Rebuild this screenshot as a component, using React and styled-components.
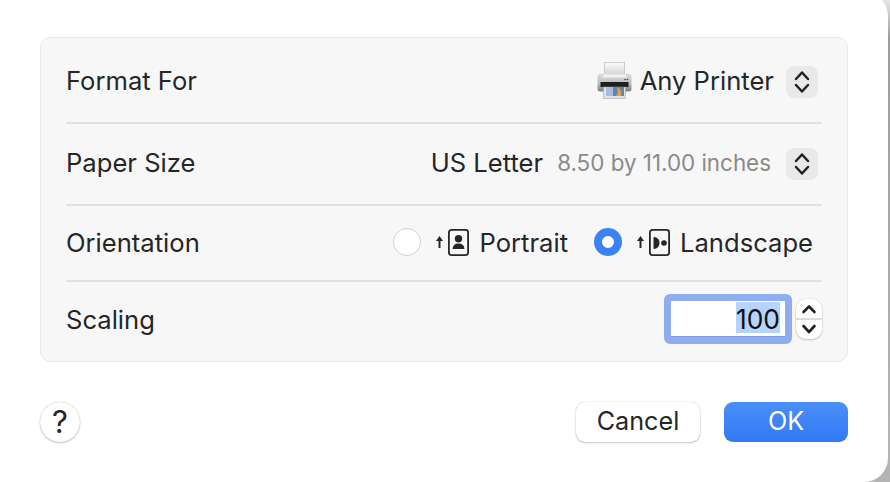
import React from "react";
import styled, {createGlobalStyle} from "styled-components";

const GlobalStyle = createGlobalStyle`
  html, body {
    margin: 0;
    padding: 0;
    background: linear-gradient(#e6e6e6, #9c9c9c 8%, #b4b4b4 90%);
  }
  body {
    width: 890px;
    height: 482px;
    overflow: hidden;
    font-family: Inter, "Liberation Sans", sans-serif;
  }
`

const Stepper = () => (
    <StepperBox>
        <svg width="16" height="26" viewBox="0 0 16 26" fill="none" stroke="#222" strokeWidth="2.5" strokeLinecap="round" strokeLinejoin="round">
            <path d="M2 10 8 3.500l6 6.500"/>
            <path d="M2 16 8 22.500l6-6.500"/>
        </svg>
    </StepperBox>
)

const PrinterIcon = () => (
    <PrinterSvg width="36" height="37" viewBox="0 0 36 37">
        <defs>
            <linearGradient id="body" x1="0" y1="0" x2="0" y2="1">
                <stop offset="0" stopColor="#dedede"/>
                <stop offset="0.55" stopColor="#bdbdbd"/>
                <stop offset="1" stopColor="#7d7d7d"/>
            </linearGradient>
            <linearGradient id="sheet" x1="0" y1="0" x2="0" y2="1">
                <stop offset="0" stopColor="#fdfdfd"/>
                <stop offset="1" stopColor="#d4d4d4"/>
            </linearGradient>
        </defs>
        <rect x="7.500" y="0.500" width="20" height="12" fill="url(#sheet)" stroke="#bcbcbc" strokeWidth="0.7"/>
        <path d="M0.500 15q0-3.500 4-3.500h26q4 0 4 3.500v12q0 2.500-3 2.500H3.500q-3 0-3-2.500z" fill="url(#body)"/>
        <path d="M7 12.500h21l2 3H5z" fill="#f2f2f2"/>
        <rect x="3.500" y="20" width="28" height="5" fill="#1f1f1f"/>
        <circle cx="28" cy="17.500" r="0.800" fill="#444"/>
        <circle cx="30.500" cy="17.500" r="0.800" fill="#444"/>
        <rect x="6.500" y="25" width="22" height="11.500" fill="#dfe4ec" stroke="#9a9a9a" strokeWidth="0.500"/>
        <rect x="9" y="25" width="18" height="9" fill="#5e84c0"/>
        <rect x="9" y="25" width="7" height="9" fill="#a9bddb"/>
        <path d="M20 25q5 2 4 9h-5q3-3 1-9z" fill="#e3a52a"/>
    </PrinterSvg>
)

const OrientationIcon = ({landscape}) => (
    <OrientationSvg width="35" height="28" viewBox="0 0 35 28" fill="none">
        <path d="M5.500 20V12" stroke="#262626" strokeWidth="2"/>
        <path d="M2 13 5.500 8 9 13z" fill="#262626"/>
        <rect x="14.900" y="1.900" width="19.200" height="25.200" rx="2.500" stroke="#262626" strokeWidth="1.800"/>
        {landscape ? (
            <g fill="#262626">
                <path d="M18.500 9q6 .5 6 6t-6 6z"/>
                <circle cx="29" cy="15" r="2.800"/>
            </g>
        ) : (
            <g fill="#262626">
                <circle cx="24.500" cy="10.800" r="3.700"/>
                <path d="M18.500 21q.5-5.500 6-5.500t6 5.500z"/>
            </g>
        )}
    </OrientationSvg>
)

export default function App() {
    return (
        <Dialog>
            <GlobalStyle/>
            <Panel>
                <Row $height={86}>
                    <Label>Format For</Label>
                    <Controls $gap={12}>
                        <PrinterIcon/>
                        <Value>Any Printer</Value>
                        <Stepper/>
                    </Controls>
                </Row>
                <Row $height={82} $lift={3}>
                    <Label>Paper Size</Label>
                    <Controls $gap={13}>
                        <Value>US Letter</Value>
                        <Hint>8.50 by 11.00 inches</Hint>
                        <Stepper/>
                    </Controls>
                </Row>
                <Row $height={76} $lift={2}>
                    <Label>Orientation</Label>
                    <RadioGroup>
                        <Option>
                            <Radio/>
                            <OrientationIcon/>
                            <Value>Portrait</Value>
                        </Option>
                        <Option>
                            <Radio $checked/>
                            <OrientationIcon landscape/>
                            <Value>Landscape</Value>
                        </Option>
                    </RadioGroup>
                </Row>
                <Row $height={79} $lift={5} $last>
                    <Label>Scaling</Label>
                    <ScaleControls>
                        <ScaleField><Selected>100</Selected></ScaleField>
                        <SpinButton>
                            <svg width="18" height="40" viewBox="0 0 18 40" fill="none" stroke="#222" strokeWidth="2.600" strokeLinecap="round" strokeLinejoin="round">
                                <path d="M3.500 13 9 7.500l5.500 5.500"/>
                                <path d="M3.500 27 9 33l5.500-6"/>
                            </svg>
                        </SpinButton>
                    </ScaleControls>
                </Row>
            </Panel>
            <Footer>
                <HelpButton>?</HelpButton>
                <Actions>
                    <Button>Cancel</Button>
                    <Button $primary>OK</Button>
                </Actions>
            </Footer>
        </Dialog>
    )
}

const Dialog = styled.div`
  box-sizing: border-box;
  width: 888px;
  height: 490px;
  margin-top: -8px;
  padding: 45px 40px 0;
  background: #fff;
  border-radius: 0 24px 24px 0;
  color: #262626;
`

const Panel = styled.div`
  box-sizing: border-box;
  width: 808px;
  height: 325px;
  padding: 0 25px;
  background: #f7f7f7;
  border: 1px solid #e9e9e9;
  border-radius: 10px;
`

const Row = styled.div`
  box-sizing: border-box;
  display: flex;
  align-items: center;
  justify-content: space-between;
  height: ${props => props.$height}px;
  padding-bottom: ${props => props.$lift || 0}px;
  border-bottom: ${props => props.$last ? "none" : "2px solid #e0e0e0"};
`

const Label = styled.span`
  font-size: 25.6px;
  color: #262626;
`

const Controls = styled.div`
  display: flex;
  align-items: center;
  gap: ${props => props.$gap}px;
  padding-right: 4px;
`

const PrinterSvg = styled.svg`
  margin-right: -5px;
`

const ScaleControls = styled.div`
  display: flex;
  align-items: center;
  gap: 4px;
`

const Value = styled.span`
  font-size: 25.6px;
  color: #262626;
`

const Hint = styled.span`
  margin: 0 2px 0 1px;
  font-size: 22.4px;
  color: #8a8a8a;
`

const StepperBox = styled.div`
  display: flex;
  align-items: center;
  justify-content: center;
  width: 32px;
  height: 32px;
  margin-top: 3px;
  border-radius: 8px;
  background: #e9e9e9;
`

const RadioGroup = styled.div`
  display: flex;
  align-items: center;
  gap: 26px;
  padding-right: 9px;
`

const Option = styled.div`
  display: flex;
  align-items: center;
`

const OrientationSvg = styled.svg`
  margin: 0 10px 0 13px;
`

const Radio = styled.span`
  box-sizing: border-box;
  width: 28px;
  height: 28px;
  border-radius: 50%;
  background: #fff;
  border: ${props => props.$checked ? "8.5px solid #3c82f6" : "1px solid #d2d2d2"};
`

const ScaleField = styled.div`
  box-sizing: border-box;
  display: flex;
  align-items: flex-start;
  justify-content: flex-end;
  flex: none;
  width: 128px;
  height: 50px;
  padding: 1px 5px 0 0;
  background: #fff;
  border: 7px solid #8fadf0;
  border-radius: 6px;
  box-shadow: inset 0 -1px 0 #7f9ee6;
  color: #111;
  font-size: 26.400px;
`

const Selected = styled.span`
  display: block;
  height: 31px;
  padding-top: 2px;
  box-sizing: border-box;
  background: #b5d3fb;
  line-height: 31px;
`

const SpinButton = styled.div`
  box-sizing: border-box;
  display: flex;
  align-items: center;
  justify-content: center;
  width: 26px;
  height: 40px;
  border-radius: 10px;
  background: linear-gradient(#fff 47%, #dcdcdc 47%, #dcdcdc 52%, #fff 52%);
  box-shadow: 0 0 1px rgba(0,0,0,.35), 0 1px 2px rgba(0,0,0,.2);
`

const Footer = styled.div`
  display: flex;
  align-items: center;
  justify-content: space-between;
  margin-top: 40px;
  width: 808px;
`

const HelpButton = styled.button`
  width: 40px;
  height: 40px;
  padding: 0 0 1px;
  border: none;
  border-radius: 50%;
  background: #fff;
  box-shadow: 0 0 1px rgba(0,0,0,.35), 0 1px 2px rgba(0,0,0,.2);
  font: 400 31px Inter, sans-serif;
  color: #262626;
`

const Actions = styled.div`
  display: flex;
  gap: 24px;
`

const Button = styled.button`
  width: 124px;
  height: 40px;
  padding: 0 0 2px;
  border: none;
  border-radius: 9px;
  background: ${props => props.$primary ? "linear-gradient(#4a8ff8, #3478f6)" : "#fff"};
  box-shadow: ${props => props.$primary ? "0 0 1px rgba(0,0,0,.1)" : "0 0 1px rgba(0,0,0,.35), 0 1px 2px rgba(0,0,0,.2)"};
  font: 25.2px Inter, sans-serif;
  color: ${props => props.$primary ? "#fff" : "#262626"};
`
